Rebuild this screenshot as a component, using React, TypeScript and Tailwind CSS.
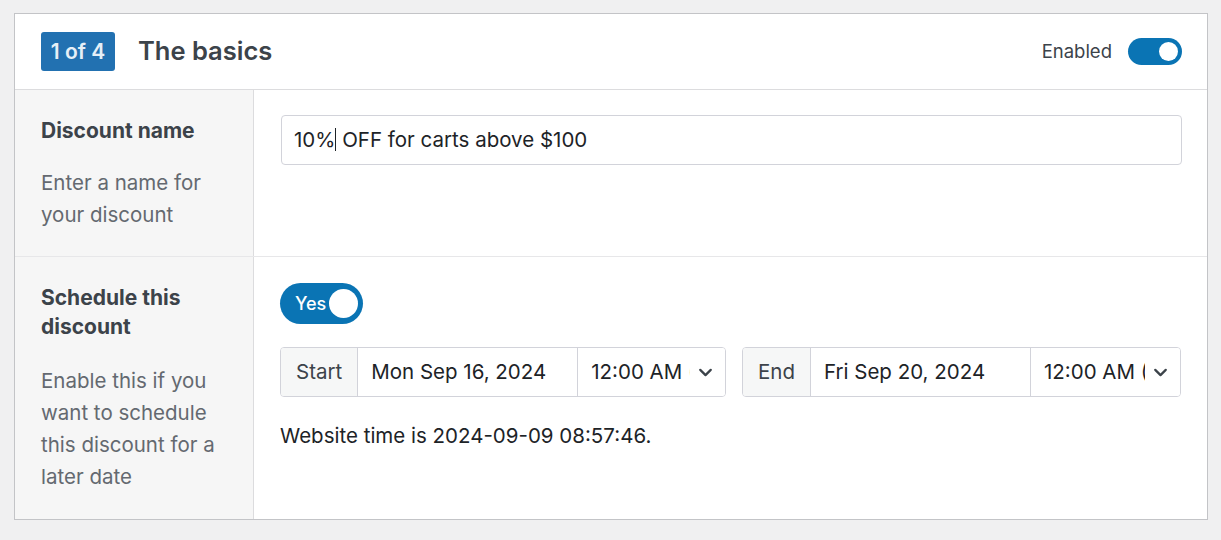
import { ChevronDown } from 'lucide-react';

const font = { fontFamily: 'Inter, "Noto Sans", sans-serif' };

function Switch({ label }: { label?: string }) {
  if (label) {
    return (
      <div className="flex h-[41px] w-[83px] items-center justify-between rounded-full bg-[#0a74b4] pl-[15px] pr-[5px]">
        <span className="text-[18px] font-medium text-white">{label}</span>
        <span className="h-[29px] w-[29px] rounded-full bg-white" />
      </div>
    );
  }
  return (
    <div className="flex h-[27px] w-[54px] items-center justify-end rounded-full bg-[#0a74b4] pr-[4px]">
      <span className="h-[19px] w-[19px] rounded-full bg-white" />
    </div>
  );
}

function DateRange({ label, date, wide }: { label: string; date: string; wide?: boolean }) {
  return (
    <div
      className={`flex h-[50px] min-w-0 basis-0 overflow-hidden rounded-[4px] border border-[#d2d3da] text-[20.5px] text-[#1d2327] ${
        wide ? 'grow-[446]' : 'grow-[439]'
      }`}
    >
      <div className="flex items-center border-r border-[#d2d3da] bg-[#f6f7f7] px-[15px] text-[#3c434a]">{label}</div>
      <div className="flex w-[220px] shrink-0 items-center border-r border-[#d2d3da] px-[13px]">{date}</div>
      <div className="relative flex min-w-0 flex-1 items-center overflow-hidden pl-[13px]">
        <span className="whitespace-nowrap">12:00 AM (UTC)</span>
        <div className="absolute right-0 top-0 flex h-full items-center bg-white pl-[5px] pr-[9px]">
          <ChevronDown className="h-[21px] w-[21px] text-[#3c434a]" strokeWidth={2.6} />
        </div>
      </div>
    </div>
  );
}

export default function App() {
  return (
    <div className="min-h-[540px] bg-[#f0f0f1] pl-[14px] pr-[13px] pt-[13px]" style={font}>
      <div className="border border-[#c3c4c7] bg-white">
        {/* Header */}
        <div className="flex h-[76px] items-center justify-between border-b border-[#dcdcde] pl-[26px] pr-[25px]">
          <div className="flex items-center gap-[23px]">
            <span className="flex h-[39px] w-[74px] items-center justify-center rounded-[3px] bg-[#2271b1] text-[21px] font-semibold text-[#e6eff7]">
              1 of 4
            </span>
            <h2 className="text-[25.5px] font-semibold text-[#3c434a]">The basics</h2>
          </div>
          <div className="flex items-center gap-[16px]">
            <span className="text-[18.5px] text-[#3c434a]">Enabled</span>
            <Switch />
          </div>
        </div>

        {/* Discount name */}
        <div className="flex border-b border-[#e7e7e9]">
          <div className="w-[239px] shrink-0 border-r border-[#dcdcde] bg-[#f6f6f6] pb-[25px] pl-[26px] pr-[24px] pt-[26px]">
            <div className="mb-[22px] text-[21px] font-bold leading-[29px] text-[#3c434a]">Discount name</div>
            <div className="text-[20.5px] leading-[32px] text-[#646970]">Enter a name for your discount</div>
          </div>
          <div className="flex-1 pl-[27px] pr-[25px] pt-[25px]">
            <div className="flex h-[50px] items-center rounded-[4px] border border-[#d2d3da] px-[12px] text-[20.5px] text-[#1d2327]">
              <span>
                10%<span className="inline-block h-[23px] w-px translate-y-[4px] bg-[#1d2327]" /> OFF for carts above $100
              </span>
            </div>
          </div>
        </div>

        {/* Schedule */}
        <div className="flex">
          <div className="w-[239px] shrink-0 border-r border-[#dcdcde] bg-[#f6f6f6] pb-[26px] pl-[26px] pr-[24px] pt-[27px]">
            <div className="mb-[24px] text-[21px] font-bold leading-[28.5px] text-[#3c434a]">Schedule this discount</div>
            <div className="text-[20.5px] leading-[32px] text-[#646970]">
              Enable this if you want to schedule this discount for a later date
            </div>
          </div>
          <div className="min-w-0 flex-1 pl-[26px] pr-[26px] pt-[26px]">
            <Switch label="Yes" />
            <div className="mt-[23px] flex gap-[16px]">
              <DateRange label="Start" date="Mon Sep 16, 2024" wide />
              <DateRange label="End" date="Fri Sep 20, 2024" />
            </div>
            <p className="mt-[24px] text-[20.5px] leading-[29px] text-[#1d2327]">Website time is 2024-09-09 08:57:46.</p>
          </div>
        </div>
      </div>
    </div>
  );
}
